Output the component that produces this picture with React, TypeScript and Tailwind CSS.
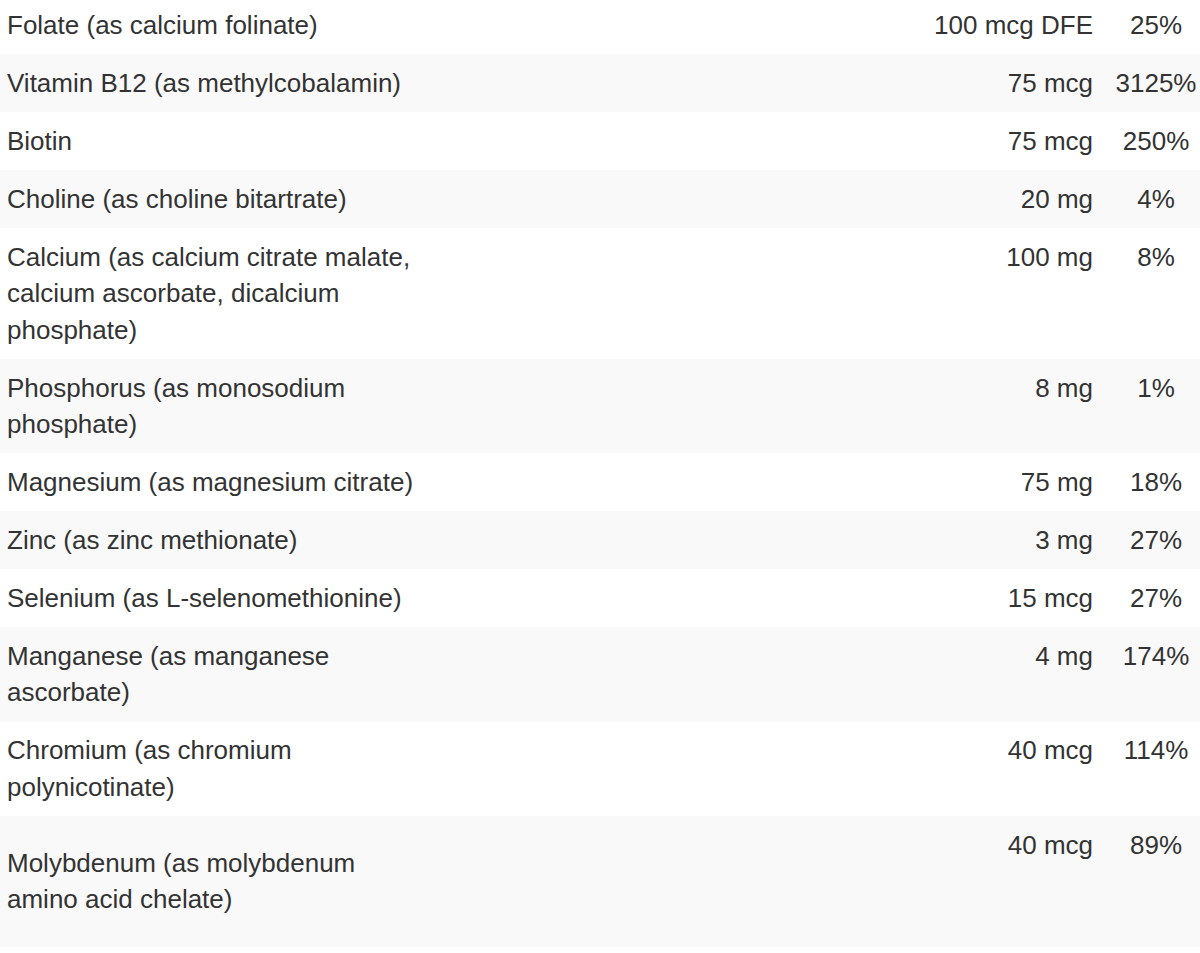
import React from 'react';

type Row = { name: string; amount: string; dv: string; tall?: boolean };

const ROWS: Row[] = [
  { name: 'Folate (as calcium folinate)', amount: '100 mcg DFE', dv: '25%' },
  { name: 'Vitamin B12 (as methylcobalamin)', amount: '75 mcg', dv: '3125%' },
  { name: 'Biotin', amount: '75 mcg', dv: '250%' },
  { name: 'Choline (as choline bitartrate)', amount: '20 mg', dv: '4%' },
  { name: 'Calcium (as calcium citrate malate, calcium ascorbate, dicalcium phosphate)', amount: '100 mg', dv: '8%' },
  { name: 'Phosphorus (as monosodium phosphate)', amount: '8 mg', dv: '1%' },
  { name: 'Magnesium (as magnesium citrate)', amount: '75 mg', dv: '18%' },
  { name: 'Zinc (as zinc methionate)', amount: '3 mg', dv: '27%' },
  { name: 'Selenium (as L-selenomethionine)', amount: '15 mcg', dv: '27%' },
  { name: 'Manganese (as manganese ascorbate)', amount: '4 mg', dv: '174%' },
  { name: 'Chromium (as chromium polynicotinate)', amount: '40 mcg', dv: '114%' },
  { name: 'Molybdenum (as molybdenum amino acid chelate)', amount: '40 mcg', dv: '89%', tall: true },
];

export default function App() {
  return (
    <div
      className="min-h-screen bg-white text-[#333333] text-[26px] leading-[36.4px]"
      style={{ fontFamily: '"Liberation Sans", Arial, sans-serif' }}
    >
      <div className="-mt-[4px]">
        {ROWS.map((row, i) => (
          <div
            key={row.name}
            className={`grid grid-cols-[434px_1fr_88px] py-[10.8px] ${i % 2 === 1 ? 'bg-[#f9f9f9]' : 'bg-white'}`}
          >
            <div className={`pl-[7px] pr-[7px] ${row.tall ? 'self-center' : ''}`}>{row.name}</div>
            <div className={`text-right pr-[19px] ${row.tall ? 'min-h-[109.2px]' : ''}`}>{row.amount}</div>
            <div className="text-center">{row.dv}</div>
          </div>
        ))}
      </div>
    </div>
  );
}
